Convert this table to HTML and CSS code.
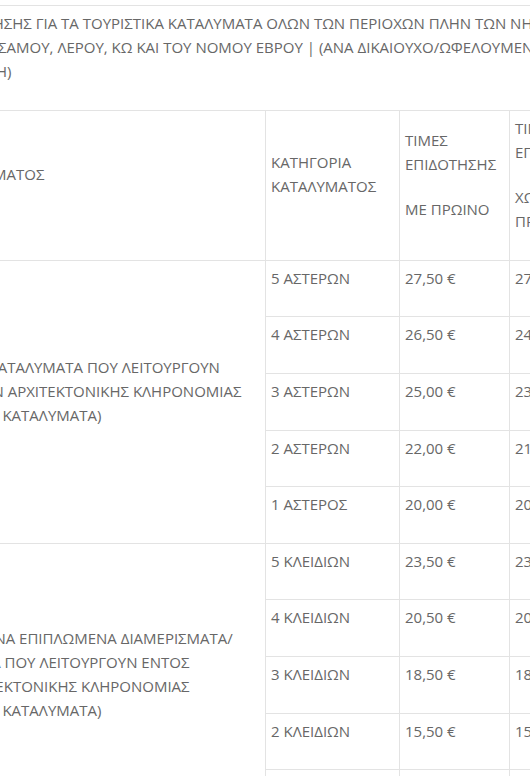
FILE: index.html
```html
<!DOCTYPE html>
<html lang="el">
<head>
<meta charset="utf-8">
<title>Τιμές επιδότησης</title>
<link rel="stylesheet" href="styles.css">
</head>
<body>
<div class="scroller">
  <table class="rates">
    <colgroup>
      <col class="col-type">
      <col class="col-cat">
      <col class="col-price">
      <col class="col-price">
    </colgroup>
    <tbody>
      <tr>
        <td colspan="4"><p>ΤΙΜΕΣ ΕΠΙΔΟΤΗΣΗΣ ΓΙΑ ΤΑ ΤΟΥΡΙΣΤΙΚΑ ΚΑΤΑΛΥΜΑΤΑ ΟΛΩΝ ΤΩΝ ΠΕΡΙΟΧΩΝ ΠΛΗΝ ΤΩΝ ΝΗΣΩΝ<br>ΛΕΣΒΟΥ, ΧΙΟΥ, ΣΑΜΟΥ, ΛΕΡΟΥ, ΚΩ ΚΑΙ ΤΟΥ ΝΟΜΟΥ ΕΒΡΟΥ | (ΑΝΑ ΔΙΚΑΙΟΥΧΟ/ΩΦΕΛΟΥΜΕΝΟ ΚΑΙ ΑΝΑ<br>ΔΙΑΝΥΚΤΕΡΕΥΣΗ)</p></td>
      </tr>
      <tr>
        <td class="type"><p>ΕΙΔΟΣ ΚΑΤΑΛΥΜΑΤΟΣ</p></td>
        <td><p>ΚΑΤΗΓΟΡΙΑ ΚΑΤΑΛΥΜΑΤΟΣ</p></td>
        <td><p>ΤΙΜΕΣ ΕΠΙΔΟΤΗΣΗΣ</p><p>ΜΕ ΠΡΩΙΝΟ</p></td>
        <td><p>ΤΙΜΕΣ ΕΠΙΔΟΤΗΣΗΣ</p><p>ΧΩΡΙΣ ΠΡΩΙΝΟ</p></td>
      </tr>
      <tr>
        <td class="type" rowspan="5"><p>ΞΕΝΟΔΟΧΕΙΑ ΚΑΤΑΛΥΜΑΤΑ ΠΟΥ ΛΕΙΤΟΥΡΓΟΥΝ ΕΝΤΟΣ ΚΤΙΡΙΩΝ ΑΡΧΙΤΕΚΤΟΝΙΚΗΣ ΚΛΗΡΟΝΟΜΙΑΣ (ΠΑΡΑΔΟΣΙΑΚΑ ΚΑΤΑΛΥΜΑΤΑ)</p></td>
        <td><p>5 ΑΣΤΕΡΩΝ</p></td>
        <td><p>27,50 €</p></td>
        <td><p>27,00 €</p></td>
      </tr>
      <tr>
        <td><p>4 ΑΣΤΕΡΩΝ</p></td>
        <td><p>26,50 €</p></td>
        <td><p>24,50 €</p></td>
      </tr>
      <tr>
        <td><p>3 ΑΣΤΕΡΩΝ</p></td>
        <td><p>25,00 €</p></td>
        <td><p>23,00 €</p></td>
      </tr>
      <tr>
        <td><p>2 ΑΣΤΕΡΩΝ</p></td>
        <td><p>22,00 €</p></td>
        <td><p>21,00 €</p></td>
      </tr>
      <tr>
        <td><p>1 ΑΣΤΕΡΟΣ</p></td>
        <td><p>20,00 €</p></td>
        <td><p>20,00 €</p></td>
      </tr>
      <tr>
        <td class="type" rowspan="5"><p>ΕΝΟΙΚΙΑΖΟΜΕΝΑ ΕΠΙΠΛΩΜΕΝΑ ΔΙΑΜΕΡΙΣΜΑΤΑ/ ΔΙΑΜΕΡΙΣΜΑΤΑ ΠΟΥ ΛΕΙΤΟΥΡΓΟΥΝ ΕΝΤΟΣ ΚΤΙΡΙΩΝ ΑΡΧΙΤΕΚΤΟΝΙΚΗΣ ΚΛΗΡΟΝΟΜΙΑΣ (ΠΑΡΑΔΟΣΙΑΚΑ ΚΑΤΑΛΥΜΑΤΑ)</p></td>
        <td><p>5 ΚΛΕΙΔΙΩΝ</p></td>
        <td><p>23,50 €</p></td>
        <td><p>23,00 €</p></td>
      </tr>
      <tr>
        <td><p>4 ΚΛΕΙΔΙΩΝ</p></td>
        <td><p>20,50 €</p></td>
        <td><p>20,00 €</p></td>
      </tr>
      <tr>
        <td><p>3 ΚΛΕΙΔΙΩΝ</p></td>
        <td><p>18,50 €</p></td>
        <td><p>18,00 €</p></td>
      </tr>
      <tr>
        <td><p>2 ΚΛΕΙΔΙΩΝ</p></td>
        <td><p>15,50 €</p></td>
        <td><p>15,00 €</p></td>
      </tr>
      <tr>
        <td><p>1 ΚΛΕΙΔΙ</p></td>
        <td><p>13,50 €</p></td>
        <td><p>13,00 €</p></td>
      </tr>
    </tbody>
  </table>
</div>
</body>
</html>
```

FILE: styles.css
```css
html,
body {
  margin: 0;
  background: #ffffff;
}

body {
  font-family: "Open Sans", "Noto Sans", sans-serif;
  font-size: 15px;
  line-height: 24px;
  color: #676767;
}

.scroller {
  width: 530px;
  height: 776px;
  overflow: hidden;
  padding-top: 5px;
  box-sizing: border-box;
}

.rates {
  border-collapse: collapse;
  table-layout: fixed;
  width: 731px;
  margin-left: -112px;
}

.col-type {
  width: 377px;
}

.col-cat {
  width: 134px;
}

.col-price {
  width: 110px;
}

.rates td {
  border: 1px solid #e3e3e3;
  padding: 5px;
  vertical-align: middle;
  text-align: left;
}

.rates td.type {
  padding-right: 16px;
}

.rates p {
  margin: 0 0 21.6px;
}
```
